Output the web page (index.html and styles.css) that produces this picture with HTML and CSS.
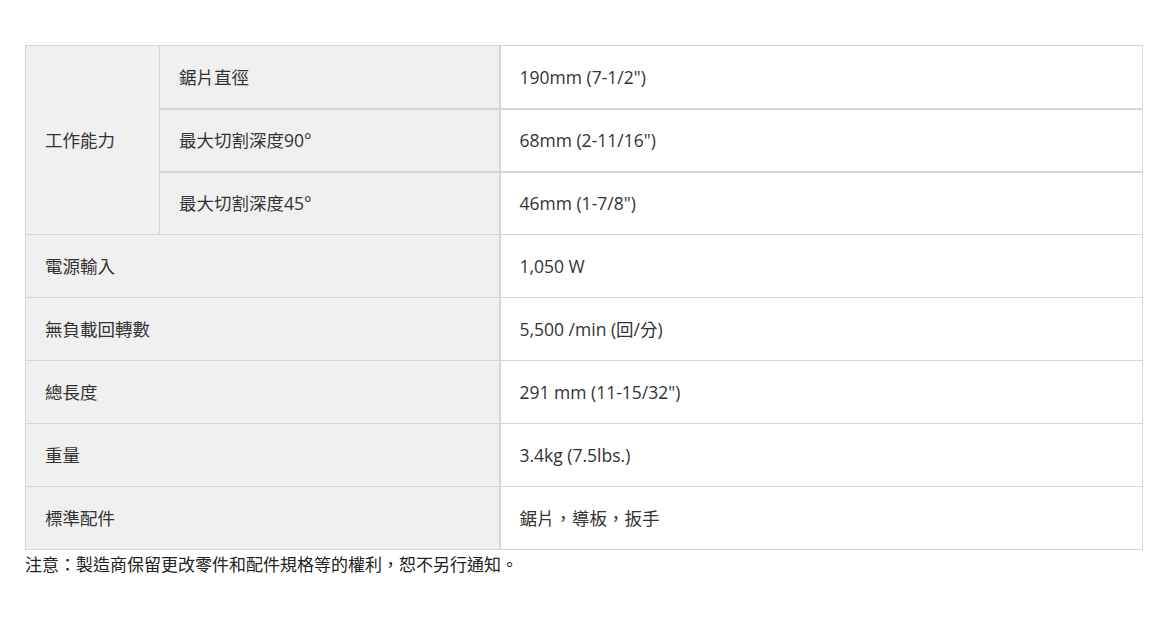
FILE: index.html
```html
<!DOCTYPE html>
<html lang="zh-Hant">
<head>
<meta charset="utf-8">
<title>規格</title>
<link rel="stylesheet" href="styles.css">
</head>
<body>
<div class="wrap">
  <table class="spec">
    <colgroup>
      <col class="c1"><col class="c2"><col class="c3">
    </colgroup>
    <tbody>
      <tr>
        <th class="lbl" rowspan="3">工作能力</th>
        <th class="lbl sub">鋸片直徑</th>
        <td class="val div">190mm (7-1/2")</td>
      </tr>
      <tr class="thick">
        <th class="lbl sub">最大切割深度90°</th>
        <td class="val div">68mm (2-11/16")</td>
      </tr>
      <tr class="thick">
        <th class="lbl sub">最大切割深度45°</th>
        <td class="val div">46mm (1-7/8")</td>
      </tr>
      <tr>
        <th class="lbl" colspan="2">電源輸入</th>
        <td class="val div">1,050 W</td>
      </tr>
      <tr>
        <th class="lbl" colspan="2">無負載回轉數</th>
        <td class="val div">5,500 /min (回/分)</td>
      </tr>
      <tr>
        <th class="lbl" colspan="2">總長度</th>
        <td class="val div">291 mm (11-15/32")</td>
      </tr>
      <tr>
        <th class="lbl" colspan="2">重量</th>
        <td class="val div">3.4kg (7.5lbs.)</td>
      </tr>
      <tr>
        <th class="lbl" colspan="2">標準配件</th>
        <td class="val div">鋸片，導板，扳手</td>
      </tr>
    </tbody>
  </table>
  <p class="note">注意：製造商保留更改零件和配件規格等的權利，恕不另行通知。</p>
</div>
</body>
</html>
```
FILE: styles.css
```css
html, body {
  margin: 0;
  padding: 0;
  background: #ffffff;
}
body {
  font-family: "Open Sans", "Noto Sans CJK TC", sans-serif;
  color: #333333;
  font-size: 16px;
  text-spacing-trim: space-all;
}
.wrap {
  padding: 45px 0 0 25px;
  width: 1117px;
}
.spec {
  width: 1117px;
  border-collapse: collapse;
  table-layout: fixed;
}
.c1 { width: 134px; }
.c2 { width: 340px; }
.c3 { width: 643px; }
.spec th, .spec td {
  border: 1px solid #d6d6d6;
  height: 63px;
  padding: 0 0 0 19px;
  text-align: left;
  font-weight: normal;
  font-size: 17.5px;
  vertical-align: middle;
  line-height: 22px;
  box-sizing: border-box;
}
.spec .lbl {
  background: #f0f0f0;
}
.spec .val {
  background: #ffffff;
}
.spec .div {
  border-left: 2px solid #d6d6d6;
}
.spec tr.thick th.sub,
.spec tr.thick td {
  border-top: 2px solid #d6d6d6;
}
.note {
  margin: 2px 0 0 0;
  font-size: 17px;
  line-height: 26px;
  color: #222222;
}
```
